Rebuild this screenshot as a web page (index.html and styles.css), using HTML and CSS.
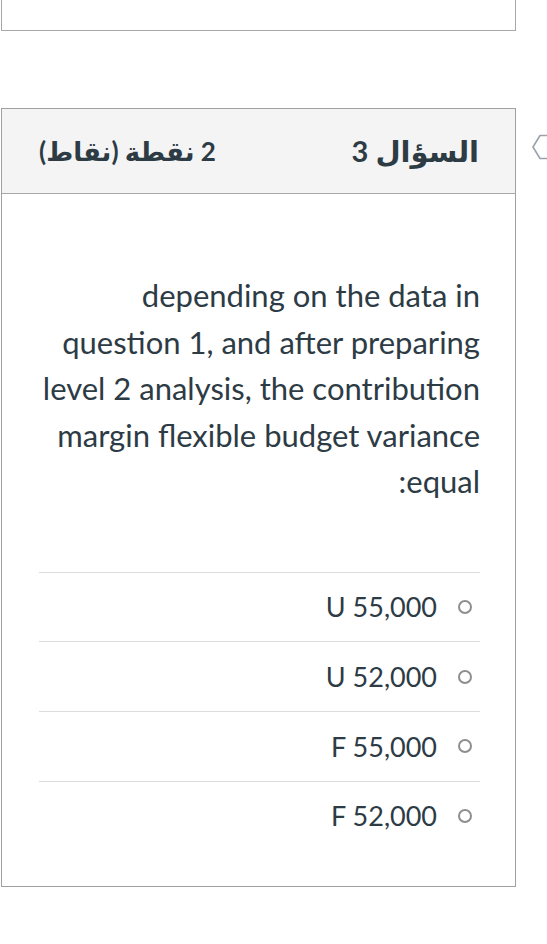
FILE: index.html
```html
<!DOCTYPE html>
<html lang="ar">
<head>
<meta charset="utf-8">
<link rel="stylesheet" href="styles.css">
</head>
<body>
<div class="page">
  <div class="main">
    <div class="prev-box"></div>
    <div class="card" dir="rtl">
      <div class="card-header">
        <span class="q-title">السؤال 3</span>
        <span class="q-points">2 نقطة (نقاط)</span>
      </div>
      <div class="card-body">
        <p class="q-text">depending on the data in question 1, and after preparing level 2 analysis, the contribution margin flexible budget variance equal:</p>
        <ul class="answers">
          <li class="answer"><span class="radio"></span><span class="label">U 55,000</span></li>
          <li class="answer"><span class="radio"></span><span class="label">U 52,000</span></li>
          <li class="answer"><span class="radio"></span><span class="label">F 55,000</span></li>
          <li class="answer"><span class="radio"></span><span class="label">F 52,000</span></li>
        </ul>
      </div>
    </div>
  </div>
  <div class="side">
    <svg class="flag" width="16" height="26" viewBox="0 0 16 26">
      <path d="M16 1.5 H9 L2 13 L9 24.5 H16" fill="none" stroke="#9aa2ad" stroke-width="1.6" stroke-linejoin="round"/>
    </svg>
  </div>
</div>
</body>
</html>
```

FILE: styles.css
```css
html, body {
  margin: 0;
  padding: 0;
  background: #ffffff;
}
body {
  font-family: Lato, "DejaVu Sans", sans-serif;
  color: #2d3b45;
}
.page {
  display: flex;
  align-items: flex-start;
  padding-left: 1px;
}
.main {
  width: 516px;
  display: flex;
  flex-direction: column;
}
.prev-box {
  height: 30px;
  border: 1px solid #a8a8a8;
  border-top: none;
}
.card {
  margin-top: 77px;
  border: 1px solid #a0a0a0;
}
.card-header {
  height: 84px;
  background: #f4f4f4;
  border-bottom: 1px solid #a8a8a8;
  display: flex;
  align-items: center;
  justify-content: space-between;
  padding: 0 36px 0 37px;
  font-weight: 700;
  color: #2d3b45;
}
.q-title {
  font-size: 29px;
}
.q-points {
  font-size: 26px;
}
.card-body {
  padding: 78px 35px 36px 37px;
}
.q-text {
  margin: 0;
  font-size: 31px;
  line-height: 46.5px;
  text-align: right;
}
.answers {
  list-style: none;
  margin: 67px 0 0 0;
  padding: 0;
}
.answer {
  height: 68.7px;
  border-top: 1px solid #dcdcdc;
  display: flex;
  align-items: center;
  gap: 21px;
  font-size: 27px;
}
.radio {
  width: 10px;
  height: 10px;
  border: 2px solid #8e8e8e;
  border-radius: 50%;
  margin-right: 8px;
  flex: none;
}
.side {
  margin-top: 134px;
  margin-left: 15px;
}
.flag {
  display: block;
}
```
